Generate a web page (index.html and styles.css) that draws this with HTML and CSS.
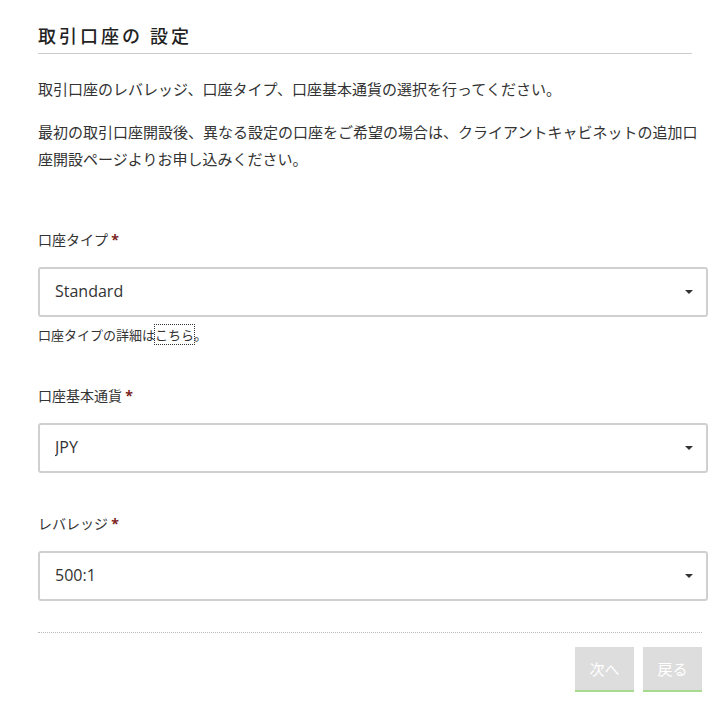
FILE: index.html
```html
<!DOCTYPE html>
<html lang="ja">
<head>
    <meta charset="UTF-8">
    <title>取引口座の設定</title>
    <link rel="stylesheet" href="styles.css">
</head>
<body>
    <div class="page">
        <h2 class="title">取引口座の 設定</h2>

        <p class="intro">取引口座のレバレッジ、口座タイプ、口座基本通貨の選択を行ってください。</p>
        <p class="intro second">最初の取引口座開設後、異なる設定の口座をご希望の場合は、クライアントキャビネットの追加口座開設ページよりお申し込みください。</p>

        <div class="field first">
            <label class="label">口座タイプ <span class="req">*</span></label>
            <div class="select-wrap">
                <select class="select">
                    <option>Standard</option>
                </select>
            </div>
            <p class="help">口座タイプの詳細は<a class="help-link" href="#">こちら</a>。</p>
        </div>

        <div class="field">
            <label class="label">口座基本通貨 <span class="req">*</span></label>
            <div class="select-wrap">
                <select class="select">
                    <option>JPY</option>
                </select>
            </div>
        </div>

        <div class="field third">
            <label class="label">レバレッジ <span class="req">*</span></label>
            <div class="select-wrap">
                <select class="select">
                    <option>500:1</option>
                </select>
            </div>
        </div>

        <div class="actions">
            <button class="btn">次へ</button>
            <button class="btn">戻る</button>
        </div>
    </div>
</body>
</html>
```

FILE: styles.css
```css
body {
    margin: 0;
    background: #fff;
    color: #333;
    font-family: "Noto Sans CJK JP", "Open Sans", sans-serif;
}
.page {
    width: 664px;
    padding: 23px 0 0 38px;
}
.title {
    width: 654px;
    margin: 0;
    padding-bottom: 6px;
    border-bottom: 1px solid #ccc;
    font-size: 18px;
    line-height: 24px;
    font-weight: 500;
    letter-spacing: 3px;
    color: #222;
}
.intro {
    margin: 21px 0 0;
    font-size: 15px;
    line-height: 27px;
}
.intro.second {
    margin-top: 16px;
}
.field {
    margin-top: 41px;
}
.field.first {
    margin-top: 57px;
}
.field.third {
    margin-top: 40px;
}
.label {
    display: block;
    font-size: 14px;
    line-height: 20px;
}
.req {
    color: #7a1e22;
    font-family: "Open Sans", sans-serif;
    font-weight: bold;
}
.select-wrap {
    position: relative;
    width: 670px;
    margin-top: 17px;
}
.select-wrap::after {
    content: "";
    position: absolute;
    right: 15px;
    top: 23px;
    border-left: 4px solid transparent;
    border-right: 4px solid transparent;
    border-top: 4px solid #333;
}
.select {
    display: block;
    width: 100%;
    height: 50px;
    padding: 0 15px 2px;
    border: 2px solid #d0d0d0;
    border-radius: 3px;
    background: #fff;
    color: #333;
    font-family: "Open Sans", sans-serif;
    font-size: 16px;
    appearance: none;
    -webkit-appearance: none;
}
.help {
    margin: 9px 0 0;
    font-size: 13px;
    line-height: 18px;
}
.help-link {
    color: #333;
    text-decoration: none;
    outline: 1px dotted #333;
}
.actions {
    display: flex;
    justify-content: flex-end;
    gap: 9px;
    margin-top: 31px;
    padding-top: 14px;
    border-top: 1px dotted #bbb;
}
.btn {
    width: 59px;
    height: 45px;
    padding: 0;
    border: none;
    border-bottom: 2px solid #a8da8e;
    background: #ddd;
    color: #fff;
    font-family: "Noto Sans CJK JP", sans-serif;
    font-size: 15px;
    cursor: pointer;
}
```
